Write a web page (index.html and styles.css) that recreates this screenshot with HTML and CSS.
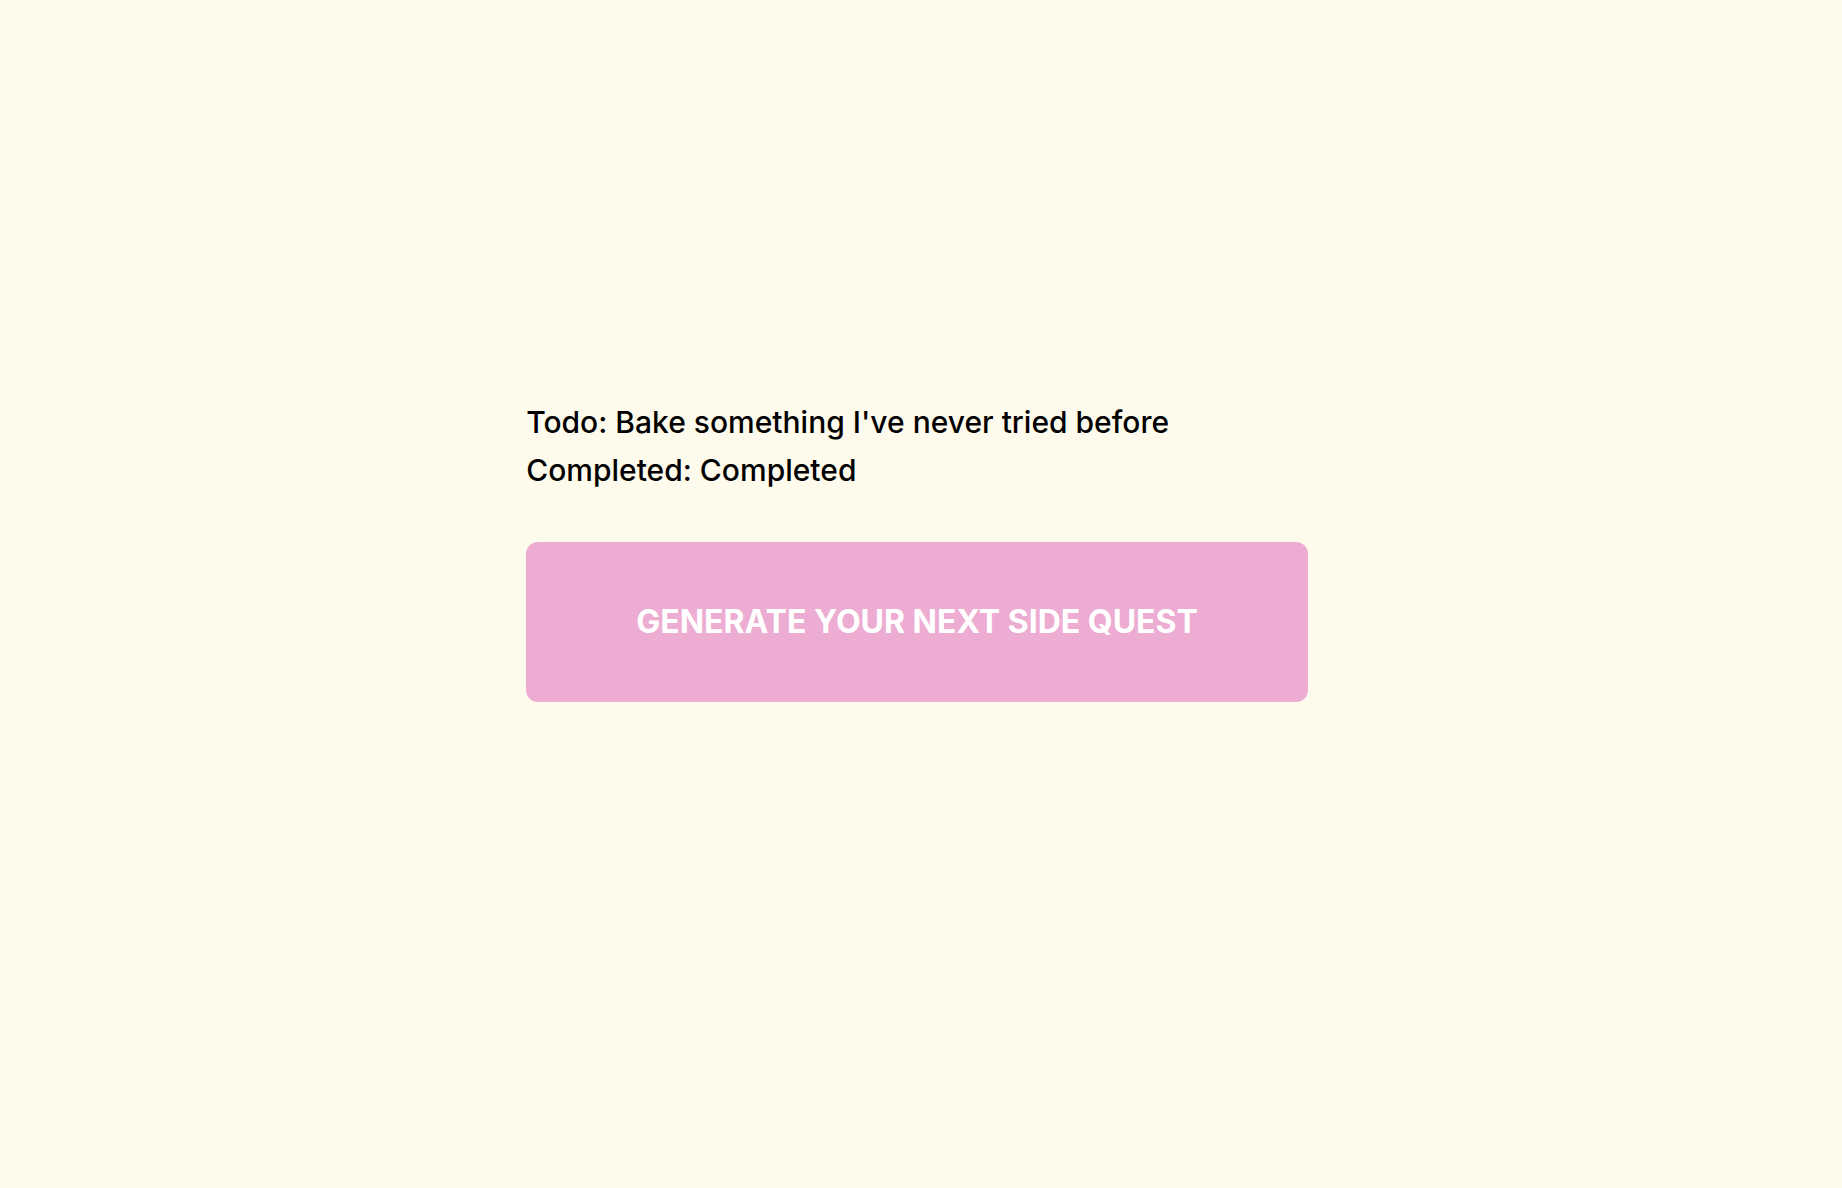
FILE: index.html
```html
<!DOCTYPE html>
<html lang="en">
<head>
<meta charset="utf-8">
<meta name="viewport" content="width=device-width, initial-scale=1">
<title>Side Quest</title>
<link rel="stylesheet" href="styles.css">
</head>
<body>
<main class="page">
  <section class="quest">
    <div class="details">
      <p>Todo: Bake something I've never tried before</p>
      <p>Completed: Completed</p>
    </div>
    <button class="generate" type="button">GENERATE YOUR NEXT SIDE QUEST</button>
  </section>
</main>
</body>
</html>
```
FILE: styles.css
```css
* {
  box-sizing: border-box;
}

body {
  margin: 0;
  background: #fffbec;
  color: #000;
  font-family: Inter, "Liberation Sans", sans-serif;
  line-height: 48px;
}

.page {
  display: flex;
  justify-content: center;
  align-items: center;
  min-height: 100vh;
  padding: 0 8px 88px 0;
}

.quest {
  display: flex;
  flex-direction: column;
  gap: 48px;
}

.details {
  font-size: 30px;
  font-weight: 500;
}

.details p {
  margin: 0;
}

.generate {
  padding: 56px 110px;
  border: 0;
  border-radius: 12px;
  background: #edacd2;
  color: #fff;
  font: inherit;
  font-size: 32px;
  font-weight: 700;
}
```
